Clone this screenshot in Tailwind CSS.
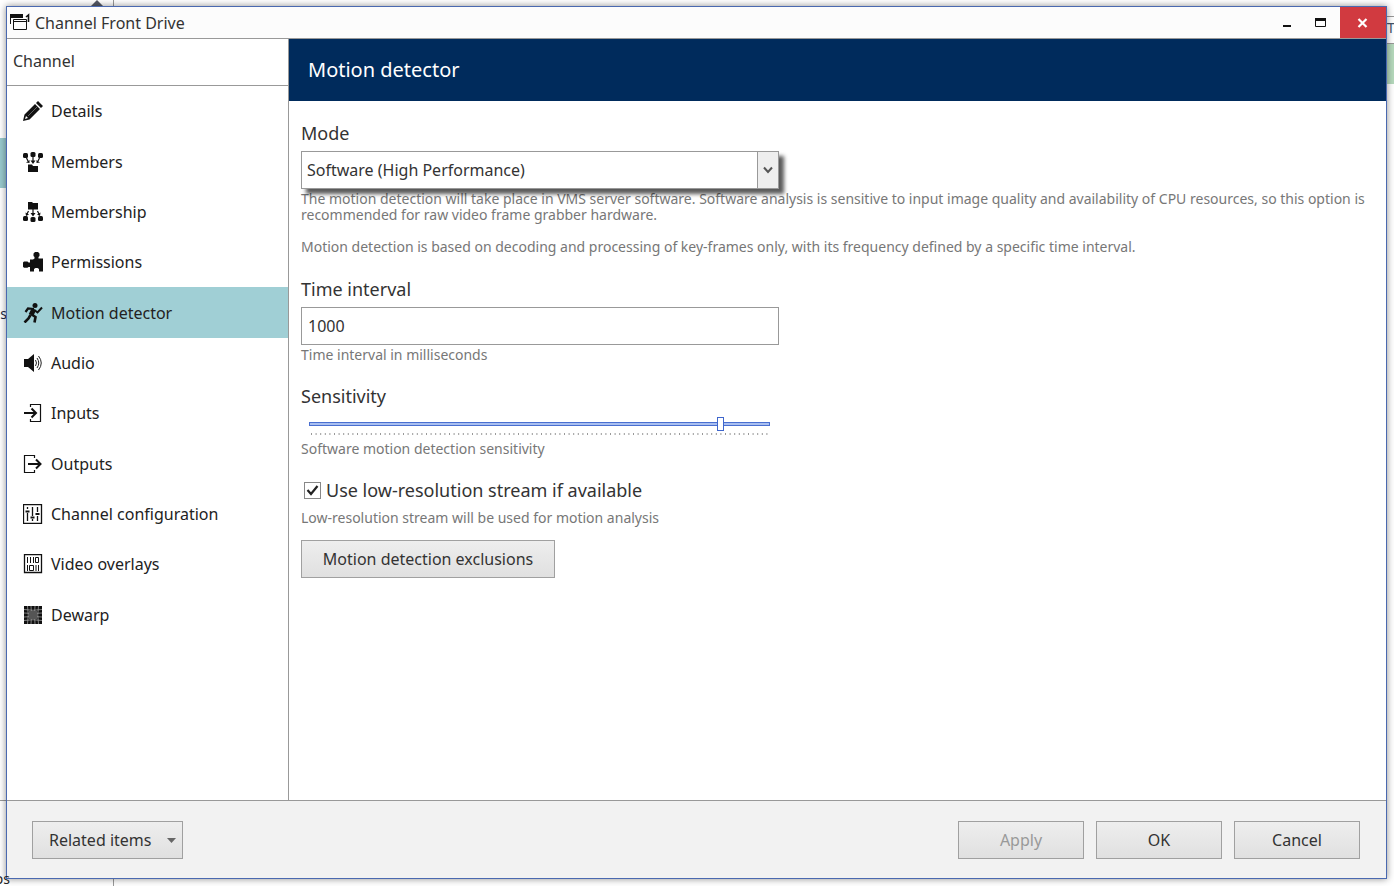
<!doctype html>
<html lang="en">
<head>
  <meta charset="UTF-8">
  <meta name="viewport" content="width=device-width, initial-scale=1.0">
  <title>Channel Front Drive</title>
  <script src="https://cdn.jsdelivr.net/npm/@tailwindcss/browser@4"></script>
</head>
<body class="relative flex min-h-screen overflow-hidden bg-white pt-[6px] pr-[7px] pb-[7px] pl-[6px] font-['Noto_Sans','Open_Sans',sans-serif] text-base text-[#333]">

  <!-- Parent window, visible around the dialog -->
  <div class="absolute inset-0 overflow-hidden" aria-hidden="true">
    <div class="absolute inset-y-0 left-[113px] w-px bg-[#999]"></div>
    <svg class="absolute top-0 left-[90px] h-[6px] w-[14px]" viewBox="0 0 14 6"><path d="M7 0l6 6H1z" fill="#555a66"/></svg>
    <div class="absolute top-[138px] left-0 h-[50px] w-[7px] bg-[#98c9cd]"></div>
    <div class="absolute top-[304px] right-full -mr-[7px] text-sm text-[#1c2a44]">es</div>
    <div class="absolute top-[800px] left-0 h-px w-[7px] bg-[#999]"></div>
    <div class="absolute top-[16px] right-0 h-2 w-[7px] border-y border-[#999]"></div>
    <div class="absolute top-[18px] left-full -ml-[7px] text-sm text-[#44546a]">T</div>
    <div class="absolute top-[43px] right-0 h-[41px] w-[7px] border-t border-[#999] bg-[#b5d9bc]"></div>
  </div>

  <div class="relative flex flex-1 flex-col border border-[#4a69b0] bg-white shadow-[0_0_7px_rgba(0,0,0,0.45)]">

    <!-- Title bar -->
    <header class="flex h-8 items-stretch border-b border-[#999] bg-[#fcfcfc]">
      <div class="flex flex-1 items-center gap-[5px] pl-[3px]">
        <svg class="h-5 w-5" viewBox="0 0 20 20" fill="none" stroke="#111">
          <path d="M0 1h13v4H0z" fill="#111" stroke="none"/>
          <path d="M.5 5v6M3.500 6.500h13v10h-13zM3 8.500h14"/>
          <path d="M16 4l2.500-2v7" stroke-width="1.600"/>
        </svg>
        <h1 class="text-base">Channel Front Drive</h1>
      </div>
      <button type="button" aria-label="Minimize" class="flex w-[34px] items-center justify-center">
        <svg class="h-4 w-4" viewBox="0 0 16 16"><path d="M4 10h8v2H4z" fill="#111"/></svg>
      </button>
      <button type="button" aria-label="Maximize" class="flex w-[34px] items-center justify-center">
        <svg class="h-4 w-4" viewBox="0 0 16 16"><path d="M2.500 4.500h10v7h-10z" fill="none" stroke="#111"/><path d="M2 3h11v3H2z" fill="#111"/></svg>
      </button>
      <button type="button" aria-label="Close" class="ml-[2px] flex w-[46px] items-center justify-center bg-[#d13a40]">
        <svg class="h-4 w-4" viewBox="0 0 16 16"><path d="M3.500 4l8 8M11.500 4l-8 8" stroke="#fff" stroke-width="2.200"/></svg>
      </button>
    </header>

    <div class="flex flex-1">
      <!-- Sidebar -->
      <aside class="w-[282px] shrink-0 border-r border-[#999]">
        <h2 class="flex h-[47px] items-center border-b border-[#999] pb-[3px] pl-[6px] text-base">Channel</h2>
        <nav class="grid h-[554px] auto-rows-fr text-[#222]">
          <a href="#details" class="flex items-center gap-2 pl-4">
            <svg class="h-5 w-5" viewBox="0 0 20 20" fill="#111"><path d="M0 20l1.500-6.500L12 3l5 5L6.500 18.500zM13 2l2-2 5 5-2 2z"/><path d="M2 18l1-3 2 2z" fill="#fff"/><path d="M5 15l9-9" stroke="#777" stroke-width=".8"/></svg>
            Details
          </a>
          <a href="#members" class="flex items-center gap-2 pl-4">
            <svg class="h-5 w-5" viewBox="0 0 20 20" fill="#111"><rect x="0" y="1" width="5" height="5" rx="1.500"/><rect x="7.500" y="0" width="5" height="5" rx="1.500"/><rect x="15" y="1" width="5" height="5" rx="1.500"/><path d="M5 12.500h4l1 1.500h5v6H5z"/><path d="M10 5v5M3.500 6l1.500 3M16.500 6L15 9" stroke="#111" stroke-width="1.200"/><path d="M7.500 8.500h5L10 12zM3 10.500l3.500-2.500v3zM17 10.500L13.500 8v3z"/></svg>
            Members
          </a>
          <a href="#membership" class="flex items-center gap-2 pl-4">
            <svg class="h-5 w-5" viewBox="0 0 20 20" fill="#111"><path d="M5 0h4l1 1h5v6.500H5z"/><rect x="0" y="14" width="5" height="5" rx="1.500"/><rect x="7.500" y="15" width="5" height="5" rx="1.500"/><rect x="15" y="14" width="5" height="5" rx="1.500"/><path d="M10 7v5M5.500 9L4 12M14.500 9l1.500 3" stroke="#111" stroke-width="1.200"/><path d="M7.500 11h5L10 14.500zM2.500 10.500l3.500 2-3 1.500zM17.500 10.500l-3.500 2 3 1.500z"/></svg>
            Membership
          </a>
          <a href="#permissions" class="flex items-center gap-2 pl-4">
            <svg class="h-5 w-5" viewBox="0 0 20 20" fill="#111"><path d="M7 7.500h3l1.500-1V5L10.500 4V1.500L12 0h3l1.500 1.500V4l-1 1v1.500h4.500v13h-4V17l-1.500-1h-2L11 17v2.500H7V15H5.500l-1 .8H1L0 14.800V10.500l1-1h3.500l1 1H7z"/></svg>
            Permissions
          </a>
          <a href="#motion" aria-current="page" class="flex items-center gap-2 bg-[#a0cfd5] pl-4">
            <svg class="h-5 w-5" viewBox="0 0 20 20" fill="none" stroke="#111"><circle cx="12" cy="2.500" r="2.500" fill="#111" stroke="none"/><path d="M2.500 9l2.500-3.500 6 .5" stroke-width="2.200"/><path d="M11 6l-3 6" stroke-width="5"/><path d="M12 7.500l2.500 2L19 4.500" stroke-width="2"/><path d="M8 11l4.500 3-1 5.500" stroke-width="2.600"/><path d="M7.500 12L5.500 15.500 1.500 19.500" stroke-width="2.600"/></svg>
            Motion detector
          </a>
          <a href="#audio" class="flex items-center gap-2 pl-4">
            <svg class="h-5 w-5" viewBox="0 0 20 20"><path d="M1 6h4l6-5v18l-6-5H1z" fill="#111"/><path d="M12.500 7q2 3 0 6M14 5q3.500 5 0 10M15.500 3q5.500 7 0 14" fill="none" stroke="#222"/></svg>
            Audio
          </a>
          <a href="#inputs" class="flex items-center gap-2 pl-4">
            <svg class="h-5 w-5" viewBox="0 0 20 20" fill="none" stroke="#111"><path d="M7.500 4V1.500h10v17h-10V16" stroke-width="1.200"/><path d="M1 10h11M8.500 5.500L13 10l-4.500 4.500" stroke-width="2"/></svg>
            Inputs
          </a>
          <a href="#outputs" class="flex items-center gap-2 pl-4">
            <svg class="h-5 w-5" viewBox="0 0 20 20" fill="none" stroke="#111"><path d="M11.500 4V1.500h-10v17h10V16" stroke-width="1.200"/><path d="M5 10h12M13 5.500l4.500 4.500-4.500 4.500" stroke-width="2"/></svg>
            Outputs
          </a>
          <a href="#configuration" class="flex items-center gap-2 pl-4">
            <svg class="h-5 w-5" viewBox="0 0 20 20" fill="none" stroke="#111"><path d="M.5.5h18v19H.5z" stroke-width="1.300"/><path d="M4.500 3v2M4.500 9v8M9.500 3v9M9.500 15v2M14.500 3v5M14.500 12v5" stroke-width="1.300"/><path d="M2.500 7.500h4M7.500 13.500h4M12.500 10h4" stroke-width="2"/></svg>
            Channel configuration
          </a>
          <a href="#overlays" class="flex items-center gap-2 pl-4">
            <svg class="h-5 w-5" viewBox="0 0 20 20" fill="none" stroke="#111"><path d="M1.500.5h17v18h-17z" stroke-width="1.300"/><path d="M4.500 3v6M7.500 3v6M10.500 3v6M12.500 3.500h3v5h-3zM4.500 11v6M6.500 11.500h4v5h-4zM13 11v6M15.500 11v6"/></svg>
            Video overlays
          </a>
          <a href="#dewarp" class="flex items-center gap-2 pl-4">
            <svg class="h-5 w-5" viewBox="0 0 20 20"><path d="M1 1h18v18H1z" fill="#111"/><path d="M4.500 1Q6 10 4.500 19M8 1q1 9 0 18M12 1q-1 9 0 18M15.500 1Q14 10 15.500 19M1 4.500q9 1.500 18 0M1 8q9 1 18 0M1 12q9-1 18 0M1 15.500q9-1.500 18 0" fill="none" stroke="#aaa" stroke-width=".7"/><path d="M6 6h8v8H6z" fill="#555"/></svg>
            Dewarp
          </a>
        </nav>
      </aside>

      <!-- Settings -->
      <main class="flex-1">
        <h2 class="flex h-[62px] items-center bg-[#002b5c] pl-[19px] text-xl text-white">Motion detector</h2>

        <form class="px-3 pt-5">
          <label for="mode" class="block text-lg leading-6">Mode</label>
          <div class="relative z-10 mt-[6px] flex h-[38px] w-[478px] border border-[#999] bg-white shadow-[5px_5px_4px_rgba(0,0,0,0.65)]">
            <select id="mode" class="w-full appearance-none pl-[5px] text-base outline-none">
              <option>Software (High Performance)</option>
            </select>
            <span class="pointer-events-none absolute inset-y-0 right-0 flex w-[21px] items-center justify-center border-l border-[#999] bg-[#eee]">
              <svg class="h-3 w-3" viewBox="0 0 12 12"><path d="M2 3.500l4 4.500 4-4.500" fill="none" stroke="#555" stroke-width="2"/></svg>
            </span>
          </div>
          <div class="mt-[2px] text-sm leading-4 text-[#777]">
            <p>The motion detection will take place in VMS server software. Software analysis is sensitive to input image quality and availability of CPU resources, so this option is recommended for raw video frame grabber hardware.</p>
            <p class="mt-4">Motion detection is based on decoding and processing of key-frames only, with its frequency defined by a specific time interval.</p>
          </div>

          <label for="interval" class="mt-[22px] block text-lg leading-6">Time interval</label>
          <input id="interval" type="text" value="1000" class="mt-[6px] block h-[38px] w-[478px] border border-[#999] pl-[6px] text-base outline-none">
          <p class="mt-[2px] text-sm leading-4 text-[#777]">Time interval in milliseconds</p>

          <label for="sensitivity" class="mt-[21px] block text-lg leading-6">Sensitivity</label>
          <div class="mt-2 ml-2 w-[461px]">
            <input id="sensitivity" type="range" min="0" max="100" value="90" class="block h-4 w-full appearance-none bg-transparent outline-none [&::-webkit-slider-runnable-track]:h-1 [&::-webkit-slider-runnable-track]:border [&::-webkit-slider-runnable-track]:border-[#4a6fd0] [&::-webkit-slider-runnable-track]:bg-[#a9bff0] [&::-webkit-slider-thumb]:-mt-[6px] [&::-webkit-slider-thumb]:h-[14px] [&::-webkit-slider-thumb]:w-[7px] [&::-webkit-slider-thumb]:appearance-none [&::-webkit-slider-thumb]:border [&::-webkit-slider-thumb]:border-[#3f66cc] [&::-webkit-slider-thumb]:bg-white">
            <svg class="mt-px h-[2px] w-full" viewBox="0 0 461 2"><path d="M2 1h457" stroke="#999" stroke-width="2" stroke-dasharray="1 3.600"/></svg>
          </div>
          <p class="mt-[6px] text-sm leading-4 text-[#777]">Software motion detection sensitivity</p>

          <div class="mt-[21px] flex items-center gap-[5px] pl-[3px]">
            <span class="relative h-[17px] w-[17px]">
              <input id="lowres" type="checkbox" checked class="peer block h-full w-full appearance-none border border-[#888] bg-white">
              <svg class="pointer-events-none absolute inset-0 hidden h-[17px] w-[17px] peer-checked:block" viewBox="0 0 17 17"><path d="M3.500 8l3.500 4 6.500-8" fill="none" stroke="#222" stroke-width="2.200"/></svg>
            </span>
            <label for="lowres" class="text-lg leading-6">Use low-resolution stream if available</label>
          </div>
          <p class="mt-2 text-sm leading-4 text-[#777]">Low-resolution stream will be used for motion analysis</p>

          <button type="button" class="mt-[14px] h-[38px] w-[254px] border border-[#a0a0a0] bg-linear-to-b from-[#eee] to-[#e0e0e0] text-base">Motion detection exclusions</button>
        </form>
      </main>
    </div>

    <footer class="flex items-center gap-3 border-t border-[#999] bg-[#f2f2f2] pt-5 pr-[26px] pb-[19px] pl-[25px]">
      <button type="button" class="mr-auto flex h-[38px] w-[151px] items-center justify-between border border-[#a0a0a0] bg-linear-to-b from-[#eee] to-[#e0e0e0] pr-[6px] pl-4">
        Related items
        <svg class="h-[5px] w-[9px]" viewBox="0 0 9 5"><path d="M0 0h9L4.500 5z" fill="#666"/></svg>
      </button>
      <button type="button" disabled class="h-[38px] w-[126px] border border-[#a0a0a0] bg-linear-to-b from-[#eee] to-[#e0e0e0] text-[#999]">Apply</button>
      <button type="button" class="h-[38px] w-[126px] border border-[#a0a0a0] bg-linear-to-b from-[#eee] to-[#e0e0e0]">OK</button>
      <button type="button" class="h-[38px] w-[126px] border border-[#a0a0a0] bg-linear-to-b from-[#eee] to-[#e0e0e0]">Cancel</button>
    </footer>
  </div>

  <div class="absolute right-full -bottom-[3px] -mr-[10px] text-sm text-[#222]" aria-hidden="true">os</div>
</body>
</html>
